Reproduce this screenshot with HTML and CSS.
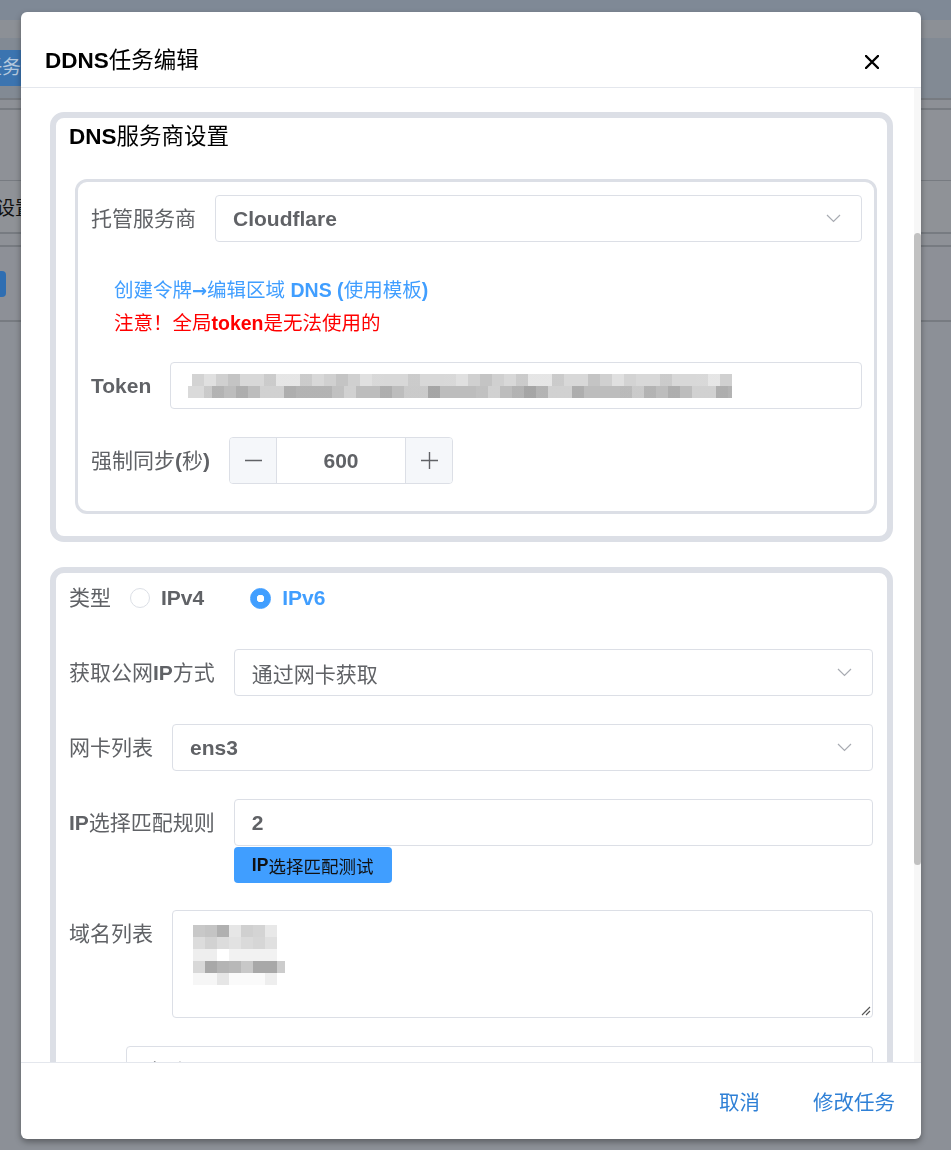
FILE: index.html
```html
<!DOCTYPE html>
<html>
<head>
<meta charset="utf-8">
<title>DDNS任务编辑</title>
<link rel="stylesheet" href="styles.css">
</head>
<body>
<div class="page">
  <div class="band band-top"></div>
  <div class="band band-light"></div>
  <div class="band band-nav"><span class="nav-btn">任务|</span></div>
  <div class="band line"></div>
  <div class="band band-gap8"></div>
  <div class="band line"></div>
  <div class="band band-row70"></div>
  <div class="band line thin"></div>
  <div class="band band-row51"><span class="page-text">设置</span></div>
  <div class="band line"></div>
  <div class="band band-gap11"></div>
  <div class="band line"></div>
  <div class="band band-row73"><span class="page-pill"></span></div>
  <div class="band line"></div>
</div>

<div class="dialog">
  <div class="dialog-header">
    <span class="dialog-title"><b>DDNS</b>任务编辑</span>
    <svg class="close" width="14" height="14" viewBox="0 0 14 14">
      <path d="M1 1L13 13M13 1L1 13" stroke="#000" stroke-width="2.4" stroke-linecap="round"/>
    </svg>
  </div>

  <div class="dialog-main">
    <div class="dialog-body">

      <section class="box">
        <div class="box-title"><b>DNS</b>服务商设置</div>
        <div class="box-inner">
          <div class="form-row row-select">
            <label class="form-label">托管服务商</label>
            <div class="control select">
              <b>Cloudflare</b>
              <svg class="chevron" width="15" height="9" viewBox="0 0 15 9"><polyline points="1,1 7.5,7.5 14,1" fill="none" stroke="#a8abb2" stroke-width="1.2"/></svg>
            </div>
          </div>
          <div class="tips">
            <div class="tip-link">创建令牌<b class="arrow">→</b>编辑区域 <b>DNS (</b>使用模板<b>)</b></div>
            <div class="tip-warn">注意！全局<b>token</b>是无法使用的</div>
          </div>
          <div class="form-row row-token">
            <label class="form-label"><b>Token</b></label>
            <div class="control token">
              <div class="mosaic">
                <div class="mosaic-row token-top"></div>
                <div class="mosaic-row token-bottom"></div>
              </div>
            </div>
          </div>
          <div class="form-row">
            <label class="form-label">强制同步<b>(</b>秒<b>)</b></label>
            <div class="number">
              <span class="num-btn num-minus">
                <svg width="17" height="17" viewBox="0 0 17 17"><path d="M0 8.5H17" stroke="#606266" stroke-width="1.4"/></svg>
              </span>
              <span class="num-value"><b>600</b></span>
              <span class="num-btn num-plus">
                <svg width="17" height="17" viewBox="0 0 17 17"><path d="M0 8.5H17M8.5 0V17" stroke="#606266" stroke-width="1.4"/></svg>
              </span>
            </div>
          </div>
        </div>
      </section>

      <section class="box box-ip">
        <div class="form-row row-radio">
          <label class="form-label">类型</label>
          <span class="radio"><span class="radio-dot"></span><b>IPv4</b></span>
          <span class="radio radio-on"><span class="radio-dot"></span><b>IPv6</b></span>
        </div>
        <div class="form-row">
          <label class="form-label">获取公网<b>IP</b>方式</label>
          <div class="control select">
            <span>通过网卡获取</span>
            <svg class="chevron" width="15" height="9" viewBox="0 0 15 9"><polyline points="1,1 7.5,7.5 14,1" fill="none" stroke="#a8abb2" stroke-width="1.2"/></svg>
          </div>
        </div>
        <div class="form-row">
          <label class="form-label">网卡列表</label>
          <div class="control select">
            <b>ens3</b>
            <svg class="chevron" width="15" height="9" viewBox="0 0 15 9"><polyline points="1,1 7.5,7.5 14,1" fill="none" stroke="#a8abb2" stroke-width="1.2"/></svg>
          </div>
        </div>
        <div class="form-row row-rule">
          <label class="form-label"><b>IP</b>选择匹配规则</label>
          <div class="control-col">
            <div class="control"><b>2</b></div>
            <span class="test-btn"><b>IP</b>选择匹配测试</span>
          </div>
        </div>
        <div class="form-row">
          <label class="form-label">域名列表</label>
          <div class="control textarea">
            <div class="mosaic domain">
              <div class="mosaic-row dm1"></div>
              <div class="mosaic-row dm2"></div>
              <div class="mosaic-row dm3"></div>
              <div class="mosaic-row dm4"></div>
              <div class="mosaic-row dm5"></div>
            </div>
            <svg class="resize" width="10" height="10" viewBox="0 0 10 10">
              <path d="M1 9L9 1M5 9L9 5" stroke="#555" stroke-width="1.1"/>
            </svg>
          </div>
        </div>
        <div class="form-row">
          <label class="form-label"><b>TTL</b></label>
          <div class="control"><span>自动</span></div>
        </div>
      </section>

    </div>
    <div class="scrollbar"><div class="thumb"></div></div>
  </div>

  <div class="dialog-footer">
    <span class="footer-btn">取消</span>
    <span class="footer-btn">修改任务</span>
  </div>
</div>
</body>
</html>
```

FILE: styles.css
```css
* {
  box-sizing: border-box;
}

body {
  margin: 0;
  height: 1150px;
  overflow: hidden;
  font-family: "Liberation Sans", "Noto Sans CJK SC", sans-serif;
  background-color: #8c9097;
}

b {
  font-weight: bold;
}

/* page behind the dialog (already dimmed) */
.band {
  display: flex;
  align-items: center;
}

.band-top {
  height: 20px;
  background-color: #7f8996;
}

.band-light {
  height: 18px;
  background-color: #8c9096;
}

.band-nav {
  height: 60px;
  background-color: #828a94;
  align-items: flex-start;
}

.nav-btn {
  margin-top: 12px;
  margin-left: -21px;
  height: 36px;
  padding: 0 6px 0 4px;
  line-height: 36px;
  font-size: 19px;
  color: #b5c9de;
  background-color: #3b74b0;
  border-radius: 3px;
}

.line {
  height: 2px;
  background-color: #777b81;
}

.line.thin {
  height: 1px;
}

.band-gap8 {
  height: 8px;
  background-color: #8d9096;
}

.band-row70 {
  height: 70px;
  background-color: #8e9197;
}

.band-row51 {
  height: 51px;
  background-color: #8f9297;
}

.page-text {
  margin-left: -4px;
  font-size: 19px;
  color: #111;
}

.band-gap11 {
  height: 11px;
  background-color: #8e9197;
}

.band-row73 {
  height: 73px;
  background-color: #8d9097;
}

.page-pill {
  width: 6px;
  height: 26px;
  background-color: #2f6eb2;
  border-radius: 0 4px 4px 0;
}

/* dialog */
.dialog {
  position: fixed;
  top: 12px;
  left: 21px;
  width: 900px;
  height: 1127px;
  background-color: #fff;
  border-radius: 6px;
  box-shadow: 0 3px 6px rgba(0, 0, 0, 0.35);
  display: flex;
  flex-direction: column;
  overflow: hidden;
}

.dialog-header {
  height: 76px;
  padding: 35px 24px 0 24px;
  border-bottom: 1px solid #e4e7ed;
  display: flex;
  justify-content: space-between;
  align-items: flex-start;
}

.dialog-title {
  font-size: 22.5px;
  line-height: 28px;
  color: #000;
}

.close {
  margin-top: 8px;
  margin-right: 18px;
}

.dialog-main {
  height: 974px;
  display: flex;
}

.dialog-body {
  flex: 1;
  padding: 24px 21px 0 29px;
  overflow: hidden;
}

.scrollbar {
  width: 7px;
  background-color: #f7f7f7;
}

.thumb {
  margin-top: 145px;
  height: 632px;
  background-color: #c1c1c1;
  border-radius: 4px;
}

.dialog-footer {
  flex: 1;
  border-top: 1px solid #e4e7ed;
  display: flex;
  justify-content: flex-end;
  align-items: center;
  gap: 53px;
  padding-right: 26px;
}

.footer-btn {
  font-size: 20.5px;
  color: #2f80d6;
}

/* boxes */
.box {
  border: 6px solid #dcdfe6;
  border-radius: 14px;
  padding: 4px 10px 22px 13px;
  margin-bottom: 25px;
}

.box-title {
  font-size: 22.5px;
  line-height: 30px;
  color: #000;
  margin-bottom: 27px;
}

.box-inner {
  margin-left: 6px;
  border: 3px solid #dcdfe6;
  border-radius: 12px;
  padding: 13px 12px 27px 13px;
}

.box-inner .form-row:last-child {
  margin-bottom: 0;
}

.box-ip {
  padding: 10px 14px 0 13px;
  height: 900px;
}

/* form rows */
.form-row {
  display: flex;
  align-items: flex-start;
  margin-bottom: 28px;
}

.form-label {
  font-size: 21px;
  line-height: 47px;
  color: #606266;
  white-space: nowrap;
  margin-right: 19px;
}

.control {
  flex: 1;
  height: 47px;
  border: 1px solid #dcdfe6;
  border-radius: 4px;
  padding: 0 20px 0 17px;
  display: flex;
  align-items: center;
  justify-content: space-between;
  font-size: 21px;
  color: #606266;
}

.row-select {
  margin-bottom: 32px;
}

.tips {
  padding-left: 23px;
  margin-bottom: 23px;
  font-size: 19.5px;
  line-height: 32px;
}

.tip-link {
  color: #409eff;
}

.arrow {
  font-family: "DejaVu Sans", sans-serif;
  font-size: 18px;
}

.tip-warn {
  color: #ff0000;
}

.token {
  justify-content: flex-start;
}

.mosaic {
  display: flex;
  flex-direction: column;
}

.mosaic-row {
  height: 12px;
}

.token-top {
  width: 540px;
  margin-left: 4px;
  background:
    repeating-linear-gradient(90deg, rgba(0, 0, 0, 0.06) 0 12px, transparent 12px 36px),
    repeating-linear-gradient(90deg, rgba(255, 255, 255, 0.35) 0 24px, transparent 24px 84px),
    repeating-linear-gradient(90deg, rgba(0, 0, 0, 0.04) 0 48px, transparent 48px 132px),
    #d8d8d8;
}

.token-bottom {
  width: 544px;
  background:
    linear-gradient(90deg, #dadada 0 16px, transparent 16px),
    repeating-linear-gradient(90deg, rgba(0, 0, 0, 0.08) 0 12px, transparent 12px 48px),
    repeating-linear-gradient(90deg, rgba(255, 255, 255, 0.3) 0 24px, transparent 24px 72px),
    repeating-linear-gradient(90deg, rgba(0, 0, 0, 0.05) 0 36px, transparent 36px 108px),
    #bdbdbd;
}

.number {
  width: 224px;
  height: 47px;
  border: 1px solid #dcdfe6;
  border-radius: 4px;
  display: flex;
  overflow: hidden;
}

.num-btn {
  width: 47px;
  background-color: #f5f7fa;
  display: flex;
  align-items: center;
  justify-content: center;
}

.num-minus {
  border-right: 1px solid #dcdfe6;
}

.num-plus {
  border-left: 1px solid #dcdfe6;
}

.num-value {
  flex: 1;
  display: flex;
  align-items: center;
  justify-content: center;
  font-size: 21px;
  color: #606266;
}

/* radio */
.row-radio {
  align-items: center;
  margin-bottom: 36px;
}

.row-radio .form-label {
  line-height: 30px;
}

.radio {
  display: flex;
  align-items: center;
  font-size: 21px;
  color: #606266;
  margin-right: 46px;
}

.radio-dot {
  width: 20px;
  height: 20px;
  border: 1px solid #dcdfe6;
  border-radius: 50%;
  background-color: #fff;
  margin-right: 11px;
}

.radio-on {
  color: #409eff;
}

.radio-on .radio-dot {
  width: 21px;
  height: 21px;
  border-color: #409eff;
  background: radial-gradient(circle, #fff 0 3.5px, #409eff 4px);
}

/* ip rule */
.row-rule {
  margin-bottom: 27px;
}

.control-col {
  flex: 1;
  display: flex;
  flex-direction: column;
  align-items: flex-start;
}

.control-col .control {
  width: 100%;
  flex: none;
}

.test-btn {
  margin-top: 1px;
  height: 36px;
  padding: 0 19px 0 18px;
  display: flex;
  align-items: center;
  background-color: #409eff;
  border-radius: 4px;
  font-size: 17.5px;
  color: #111;
}

/* textarea */
.textarea {
  height: 108px;
  flex-direction: column;
  align-items: flex-start;
  padding: 14px 1px 1px 20px;
}

.resize {
  margin-top: auto;
  align-self: flex-end;
}

.dm1 {
  width: 84px;
  background: linear-gradient(90deg, #c8c8c8 0 12px, #c4c4c4 12px 24px, #b0b0b0 24px 36px, #e6e6e6 36px 48px, #d0d0d0 48px 60px, #d4d4d4 60px 72px, #e8e8e8 72px 84px);
}

.dm2 {
  width: 84px;
  background: linear-gradient(90deg, #dcdcdc 0 12px, #d2d2d2 12px 24px, #dcdcdc 24px 36px, #e2e2e2 36px 48px, #dadada 48px 60px, #d6d6d6 60px 72px, #e0e0e0 72px 84px);
}

.dm3 {
  width: 84px;
  background: linear-gradient(90deg, #eeeeee 0 24px, #ffffff 24px 36px, #f2f2f2 36px 84px);
}

.dm4 {
  width: 92px;
  background: linear-gradient(90deg, #d8d8d8 0 12px, #a8a8a8 12px 24px, #b4b4b4 24px 36px, #b8b8b8 36px 48px, #c8c8c8 48px 60px, #a8a8a8 60px 84px, #cccccc 84px 92px);
}

.dm5 {
  width: 84px;
  background: linear-gradient(90deg, #f6f6f6 0 24px, #e6e6e6 24px 36px, #fafafa 36px 72px, #eeeeee 72px 84px);
}
```
